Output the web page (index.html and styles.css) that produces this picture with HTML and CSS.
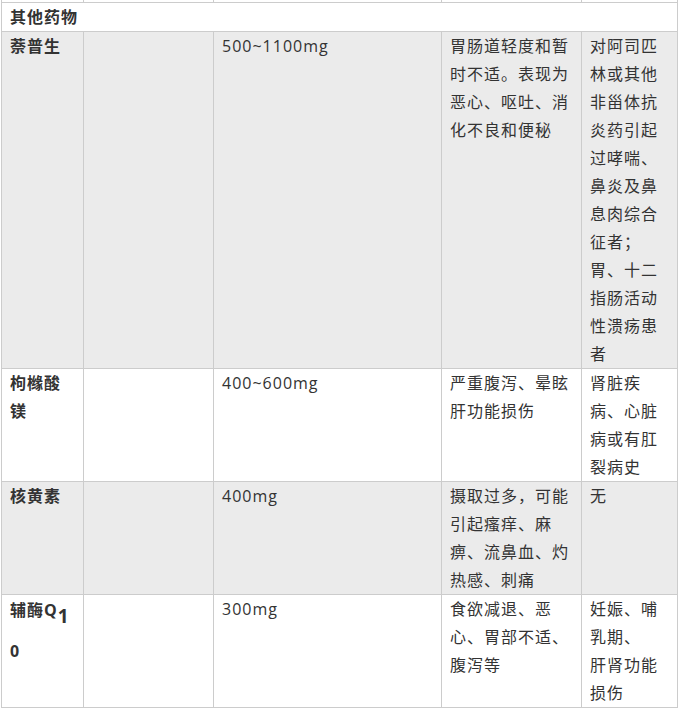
FILE: index.html
```html
<!DOCTYPE html>
<html lang="zh-CN">
<head>
<meta charset="utf-8">
<title>其他药物</title>
<link rel="stylesheet" href="styles.css">
</head>
<body>
<div class="wrap">
<table class="drug-table">
  <colgroup>
    <col class="c1"><col class="c2"><col class="c3"><col class="c4"><col class="c5">
  </colgroup>
  <tbody>
    <tr class="row-white cut"><td></td><td></td><td></td><td></td><td></td></tr>
    <tr class="row-white"><td colspan="5" class="name">其他药物</td></tr>
    <tr class="row-gray">
      <td class="name">萘普生</td>
      <td></td>
      <td>500~1100mg</td>
      <td>胃肠道轻度和暂时不适。表现为恶心、呕吐、消化不良和便秘</td>
      <td>对阿司匹林或其他非甾体抗炎药引起过哮喘、鼻炎及鼻息肉综合征者；<br>胃、十二指肠活动性溃疡患者</td>
    </tr>
    <tr class="row-white">
      <td class="name">枸橼酸镁</td>
      <td></td>
      <td>400~600mg</td>
      <td>严重腹泻、晕眩肝功能损伤</td>
      <td>肾脏疾病、心脏病或有肛裂病史</td>
    </tr>
    <tr class="row-gray">
      <td class="name">核黄素</td>
      <td></td>
      <td>400mg</td>
      <td>摄取过多，可能引起瘙痒、麻痹、流鼻血、灼热感、刺痛</td>
      <td>无</td>
    </tr>
    <tr class="row-white">
      <td class="name">辅酶Q<sub class="sub">1</sub>0</td>
      <td></td>
      <td>300mg</td>
      <td>食欲减退、恶心、胃部不适、腹泻等</td>
      <td>妊娠、哺乳期、<br>肝肾功能损伤</td>
    </tr>
  </tbody>
</table>
</div>
</body>
</html>
```
FILE: styles.css
```css
html, body {
  margin: 0;
  padding: 0;
  background: #ffffff;
}

.wrap {
  overflow: hidden;
  height: 713px;
}

.drug-table {
  margin: -27px 0 0 1px;
  width: 677px;
  table-layout: fixed;
  border-collapse: collapse;
  font-family: "Open Sans", "Noto Sans CJK SC", sans-serif;
  font-size: 16px;
  line-height: 28px;
  letter-spacing: 1px;
  color: #333333;
}

.c1 { width: 82px; }
.c2 { width: 130px; }
.c3 { width: 228px; }
.c4 { width: 140px; }
.c5 { width: 96px; }

.drug-table td {
  border: 1px solid #cccccc;
  padding: 0 8px;
  vertical-align: top;
  word-break: break-all;
  line-break: strict;
}

.cut td {
  height: 28px;
}

.row-white td { background: #ffffff; }
.row-gray td { background: #ebebeb; }

.name {
  font-weight: bold;
}

.sub {
  font-size: 19px;
  vertical-align: -7px;
  line-height: 42px;
  letter-spacing: 0;
}
```
